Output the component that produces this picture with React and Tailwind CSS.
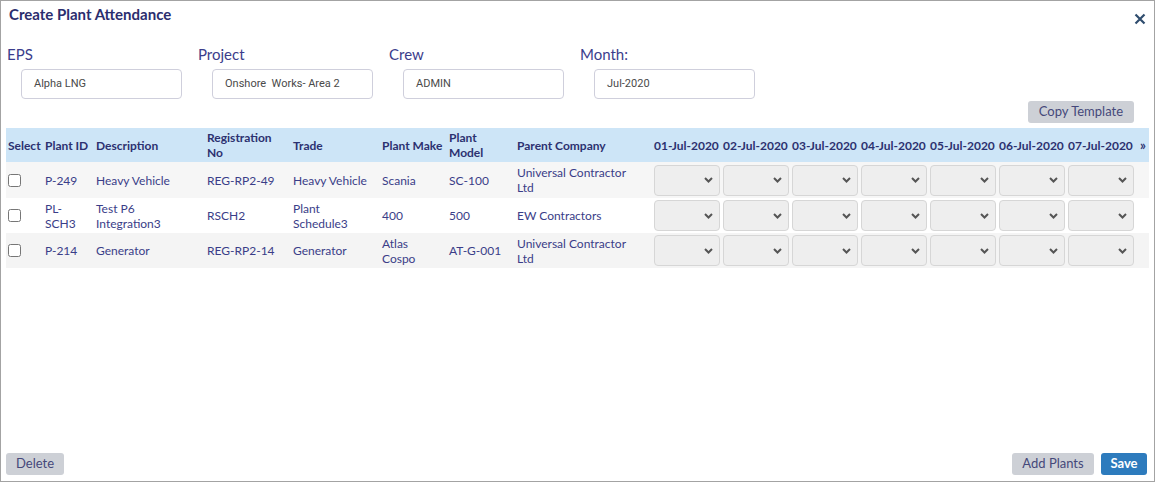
import React from 'react';

const dates = ['01-Jul-2020', '02-Jul-2020', '03-Jul-2020', '04-Jul-2020', '05-Jul-2020', '06-Jul-2020', '07-Jul-2020'];

const rows = [
  { id: 'P-249', desc: 'Heavy Vehicle', reg: 'REG-RP2-49', trade: 'Heavy Vehicle', make: 'Scania', model: 'SC-100', parent: 'Universal Contractor Ltd', bg: 'bg-[#f6f6f6]', h: 'h-[36px]' },
  { id: 'PL-SCH3', desc: 'Test P6 Integration3', reg: 'RSCH2', trade: 'Plant Schedule3', make: '400', model: '500', parent: 'EW Contractors', bg: 'bg-white', h: 'h-[35px]' },
  { id: 'P-214', desc: 'Generator', reg: 'REG-RP2-14', trade: 'Generator', make: 'Atlas Cospo', model: 'AT-G-001', parent: 'Universal Contractor Ltd', bg: 'bg-[#f4f4f4]', h: 'h-[35px]' }
];

const fields = [
  { label: 'EPS', value: 'Alpha LNG' },
  { label: 'Project', value: 'Onshore  Works- Area 2' },
  { label: 'Crew', value: 'ADMIN' },
  { label: 'Month:', value: 'Jul-2020' }
];

function DaySelect() {
  return (
    <div className="w-[66px] h-[31px] rounded-[4px] border border-[#d6d6d6] bg-[#eeeeee] flex items-center justify-end pr-[6px]">
      <svg width="9" height="6" viewBox="0 0 9 6" fill="none">
        <path d="M1 1l3.5 3.5L8 1" stroke="#555" strokeWidth="2" />
      </svg>
    </div>
  );
}

export default function App() {
  return (
    <div className="w-[1155px] h-[482px] border border-[#a3a3a3] bg-white flex flex-col font-['Lato',sans-serif] overflow-hidden">
      {/* Header */}
      <div className="flex items-start justify-between pl-[8px] pr-[8px] pt-[2px]">
        <h1 className="text-[15px] font-bold text-[#2b2d6e] leading-[22px]">Create Plant Attendance</h1>
        <button className="mt-[10px] text-[#2f4d6e]">
          <svg width="12" height="12" viewBox="0 0 12 12">
            <path d="M1.5 1.5l9 9M10.5 1.5l-9 9" stroke="currentColor" strokeWidth="2.2" />
          </svg>
        </button>
      </div>

      {/* Fields */}
      <div className="flex pl-[6px] mt-[21px]">
        {fields.map((f) => (
          <div key={f.label} className="w-[191px]">
            <div className="text-[15px] text-[#3b3d8c] leading-[16px]">{f.label}</div>
            <div className="ml-[14px] mt-[7px] w-[161px] h-[30px] rounded-[4px] border border-[#cfcfdc] flex items-center pl-[12px] font-['Roboto',sans-serif] text-[11px] text-[#4a4a4a] whitespace-pre">
              {f.value}
            </div>
          </div>
        ))}
      </div>

      {/* Copy template */}
      <div className="flex justify-end pr-[20px] mt-[2px]">
        <button className="h-[22px] px-[11px] rounded-[3px] bg-[#cdd0d6] text-[13px] text-[#45487a]">Copy Template</button>
      </div>

      {/* Table */}
      <div className="px-[5px] mt-[5px]">
        <table className="table-fixed border-collapse w-[1143px] text-[12px] leading-[15px]">
          <colgroup>
            <col className="w-[36px]" />
            <col className="w-[51px]" />
            <col className="w-[111px]" />
            <col className="w-[86px]" />
            <col className="w-[89px]" />
            <col className="w-[67px]" />
            <col className="w-[68px]" />
            <col className="w-[137px]" />
            {dates.map((d, i) => (
              <col key={d} className={i === 6 ? 'w-[71px]' : 'w-[69px]'} />
            ))}
            <col className="w-[13px]" />
          </colgroup>
          <thead>
            <tr className="bg-[#cde5f7] h-[34px] text-[#2c3170] font-bold text-left">
              <th className="pl-[2px] font-bold">Select</th>
              <th className="pl-[3px] font-bold whitespace-nowrap">Plant ID</th>
              <th className="pl-[3px] font-bold">Description</th>
              <th className="pl-[3px] pr-[6px] font-bold">Registration No</th>
              <th className="pl-[3px] font-bold">Trade</th>
              <th className="pl-[3px] font-bold whitespace-nowrap">Plant Make</th>
              <th className="pl-[3px] pr-[6px] font-bold">Plant Model</th>
              <th className="pl-[3px] font-bold">Parent Company</th>
              {dates.map((d) => (
                <th key={d} className="pl-[3px] font-bold whitespace-nowrap">{d}</th>
              ))}
              <th className="pl-[4px] font-bold text-[13px]">»</th>
            </tr>
          </thead>
          <tbody>
            {rows.map((r) => (
              <tr key={r.id} className={`${r.bg} ${r.h} text-[#3a3d88]`}>
                <td className="pl-[2px]">
                  <input type="checkbox" className="block w-[13px] h-[13px] m-0" />
                </td>
                <td className="pl-[3px] pr-[6px]">{r.id}</td>
                <td className="pl-[3px] pr-[6px]">{r.desc}</td>
                <td className="pl-[3px] pr-[6px]">{r.reg}</td>
                <td className="pl-[3px] pr-[6px]">{r.trade}</td>
                <td className="pl-[3px] pr-[6px]">{r.make}</td>
                <td className="pl-[3px] pr-[6px]">{r.model}</td>
                <td className="pl-[3px] pr-[8px]">{r.parent}</td>
                {dates.map((d) => (
                  <td key={d} className="pl-[3px]">
                    <DaySelect />
                  </td>
                ))}
                <td />
              </tr>
            ))}
          </tbody>
        </table>
      </div>

      {/* Footer */}
      <div className="mt-auto flex items-center justify-between pl-[5px] pr-[7px] pb-[6px]">
        <button className="h-[22px] w-[58px] rounded-[3px] bg-[#cdd0d6] text-[13px] text-[#45487a]">Delete</button>
        <div className="flex gap-[7px]">
          <button className="h-[22px] w-[82px] rounded-[3px] bg-[#cdd0d6] text-[13px] text-[#45487a]">Add Plants</button>
          <button className="h-[22px] w-[46px] rounded-[3px] bg-[#2d7bbd] text-[13px] font-bold text-white">Save</button>
        </div>
      </div>
    </div>
  );
}
